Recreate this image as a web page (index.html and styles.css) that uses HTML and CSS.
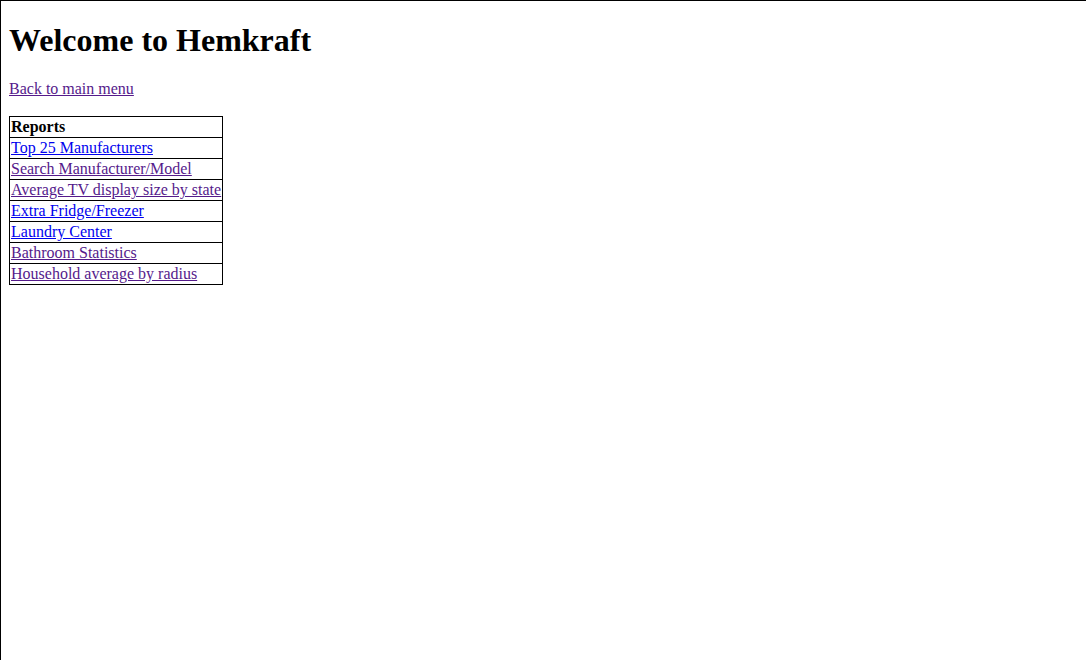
FILE: index.html
```html
<!DOCTYPE html>
<html>
<head>
<meta charset="utf-8">
<title>Hemkraft</title>
<link rel="stylesheet" href="styles.css">
</head>
<body>
<div class="frame">
  <div class="page">
    <h1 class="title">Welcome to Hemkraft</h1>
    <p class="back"><a class="visited" href="#">Back to main menu</a></p>
    <table class="reports">
      <tr><th>Reports</th></tr>
      <tr><td><a class="link" href="#">Top 25 Manufacturers</a></td></tr>
      <tr><td><a class="visited" href="#">Search Manufacturer/Model</a></td></tr>
      <tr><td><a class="visited" href="#">Average TV display size by state</a></td></tr>
      <tr><td><a class="link" href="#">Extra Fridge/Freezer</a></td></tr>
      <tr><td><a class="link" href="#">Laundry Center</a></td></tr>
      <tr><td><a class="visited" href="#">Bathroom Statistics</a></td></tr>
      <tr><td><a class="visited" href="#">Household average by radius</a></td></tr>
    </table>
  </div>
</div>
</body>
</html>
```
FILE: styles.css
```css
html, body {
  margin: 0;
  padding: 0;
  background: #fff;
}
body {
  font-family: "Liberation Serif", "Times New Roman", serif;
  font-size: 16px;
  color: #000;
}
.frame {
  border-top: 1px solid #000;
  border-left: 1px solid #000;
  min-height: 660px;
  box-sizing: border-box;
}
.page {
  padding: 1px 8px 8px 8px;
}
.title {
  font-size: 32px;
  font-weight: bold;
  margin: 20px 0 21px 0;
}
.back {
  margin: 0 0 18px 0;
}
.link { color: #0000ee; }
.visited { color: #551a8b; }
.reports {
  border-collapse: collapse;
  border: 1px solid #000;
}
.reports th, .reports td {
  border: 1px solid #000;
  padding: 1px;
  text-align: left;
  font-weight: normal;
}
.reports th { font-weight: bold; }
```
